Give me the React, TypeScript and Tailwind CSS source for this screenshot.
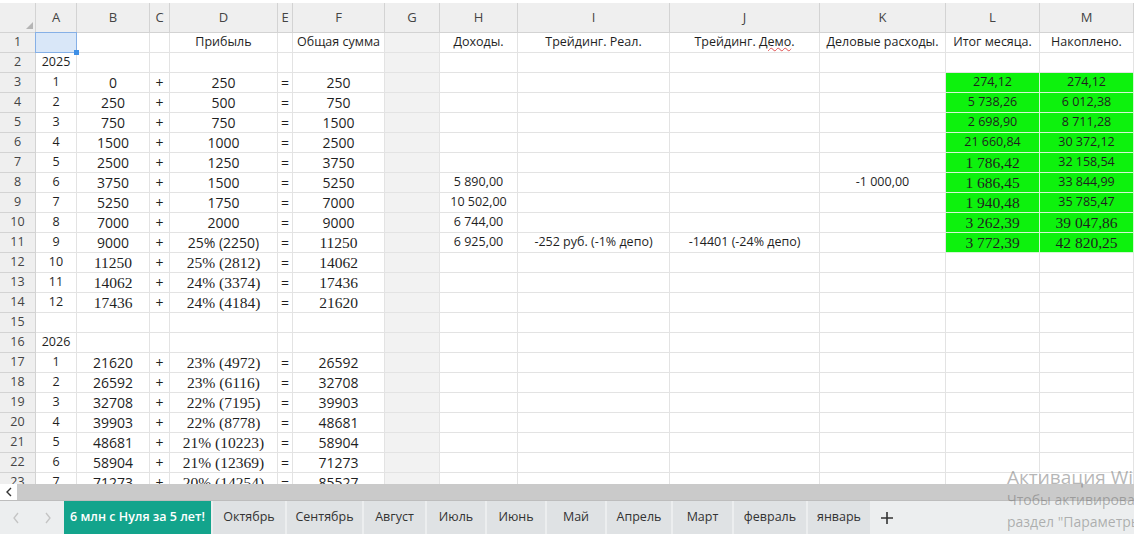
import React from 'react';

const colLetters = ['A', 'B', 'C', 'D', 'E', 'F', 'G', 'H', 'I', 'J', 'K', 'L', 'M'];

// rows 1..23, columns A..M
const rows: string[][] = [
  ['', '', '', 'Прибыль', '', 'Общая сумма', '', 'Доходы.', 'Трейдинг. Реал.', 'Трейдинг. Демо.', 'Деловые расходы.', 'Итог месяца.', 'Накоплено.'],
  ['2025', '', '', '', '', '', '', '', '', '', '', '', ''],
  ['1', '0', '+', '250', '=', '250', '', '', '', '', '', '274,12', '274,12'],
  ['2', '250', '+', '500', '=', '750', '', '', '', '', '', '5 738,26', '6 012,38'],
  ['3', '750', '+', '750', '=', '1500', '', '', '', '', '', '2 698,90', '8 711,28'],
  ['4', '1500', '+', '1000', '=', '2500', '', '', '', '', '', '21 660,84', '30 372,12'],
  ['5', '2500', '+', '1250', '=', '3750', '', '', '', '', '', '1 786,42', '32 158,54'],
  ['6', '3750', '+', '1500', '=', '5250', '', '5 890,00', '', '', '-1 000,00', '1 686,45', '33 844,99'],
  ['7', '5250', '+', '1750', '=', '7000', '', '10 502,00', '', '', '', '1 940,48', '35 785,47'],
  ['8', '7000', '+', '2000', '=', '9000', '', '6 744,00', '', '', '', '3 262,39', '39 047,86'],
  ['9', '9000', '+', '25% (2250)', '=', '11250', '', '6 925,00', '-252 руб. (-1% депо)', '-14401 (-24% депо)', '', '3 772,39', '42 820,25'],
  ['10', '11250', '+', '25% (2812)', '=', '14062', '', '', '', '', '', '', ''],
  ['11', '14062', '+', '24% (3374)', '=', '17436', '', '', '', '', '', '', ''],
  ['12', '17436', '+', '24% (4184)', '=', '21620', '', '', '', '', '', '', ''],
  ['', '', '', '', '', '', '', '', '', '', '', '', ''],
  ['2026', '', '', '', '', '', '', '', '', '', '', '', ''],
  ['1', '21620', '+', '23% (4972)', '=', '26592', '', '', '', '', '', '', ''],
  ['2', '26592', '+', '23% (6116)', '=', '32708', '', '', '', '', '', '', ''],
  ['3', '32708', '+', '22% (7195)', '=', '39903', '', '', '', '', '', '', ''],
  ['4', '39903', '+', '22% (8778)', '=', '48681', '', '', '', '', '', '', ''],
  ['5', '48681', '+', '21% (10223)', '=', '58904', '', '', '', '', '', '', ''],
  ['6', '58904', '+', '21% (12369)', '=', '71273', '', '', '', '', '', '', ''],
  ['7', '71273', '+', '20% (14254)', '=', '85527', '', '', '', '', '', '', ''],
];

const tabs = [
  { name: 'Октябрь', w: 'w-[72px]' },
  { name: 'Сентябрь', w: 'w-[75px]' },
  { name: 'Август', w: 'w-[61px]' },
  { name: 'Июль', w: 'w-[58px]' },
  { name: 'Июнь', w: 'w-[58px]' },
  { name: 'Май', w: 'w-[58px]' },
  { name: 'Апрель', w: 'w-[64px]' },
  { name: 'Март', w: 'w-[59px]' },
  { name: 'февраль', w: 'w-[72px]' },
  { name: 'январь', w: 'w-[62px]' },
];

function isSerif(r: number, c: number) {
  if (c === 1 && r >= 12 && r <= 14) return true;
  if (c === 3 && ((r >= 12 && r <= 14) || r >= 17)) return true;
  if (c === 5 && r >= 11 && r <= 14) return true;
  if (c === 11 && r >= 7 && r <= 11) return true;
  if (c === 12 && r >= 10 && r <= 11) return true;
  return false;
}

function Cell({ r, c, text }: { r: number; c: number; text: string }) {
  const green = (c === 11 || c === 12) && r >= 3 && r <= 11;
  const gray = c === 6;
  const big = r > 1 && c >= 1 && c <= 5;
  const serif = isSerif(r, c);

  let bg = 'bg-white border-[#e3e3e3]';
  if (green) bg = 'bg-[#0df20d] border-[#d3f7d3]';
  if (gray) bg = 'bg-[#f2f2f2] border-[#e3e3e3]';

  if (r === 1 && c === 0) {
    return (
      <div className="relative border-r border-b border-[#e3e3e3] bg-white">
        <div className="absolute -left-px -top-px h-[21px] w-[42px] border border-[#86b0e6] bg-[#d9e7f8]" />
        <div className="absolute -bottom-[3px] -right-[3px] h-[5px] w-[5px] bg-[#3d8fe6]" />
      </div>
    );
  }

  return (
    <div
      className={`flex items-center justify-center overflow-visible whitespace-nowrap border-r border-b text-[#1f1f1f] ${bg} ${
        serif
          ? "font-['Liberation_Serif',serif] text-[15.5px]"
          : big
          ? "font-['Open_Sans',sans-serif] text-[14px]"
          : "font-['Open_Sans',sans-serif] text-[12.5px]"
      }`}
    >
      {r === 1 && c === 9 ? (
        <span>
          Трейдинг. <span className="underline decoration-wavy decoration-[#e05050] decoration-1">Демо</span>.
        </span>
      ) : (
        text
      )}
    </div>
  );
}

export default function App() {
  return (
    <div className="relative h-[534px] w-[1134px] overflow-hidden bg-white font-['Open_Sans',sans-serif]">
      <div className="h-[3px] bg-white" />
      <div className="h-[481px] overflow-hidden">
        <div className="grid grid-cols-[36px_41px_73px_20px_108px_15px_92px_55px_78px_152px_150px_126px_94px_94px] grid-rows-[30px] auto-rows-[20px]">
          <div className="relative border-r border-b border-[#d3d3d3] bg-[#efefef]">
            <svg className="absolute bottom-[3px] right-[2px]" width="7" height="7" viewBox="0 0 7 7">
              <path d="M7 0 L7 7 L0 7 Z" fill="#b5b5b5" />
            </svg>
          </div>
          {colLetters.map((l) => (
            <div
              key={l}
              className="flex items-center justify-center border-r border-b border-[#d3d3d3] bg-[#efefef] text-[13px] text-[#444]"
            >
              {l}
            </div>
          ))}
          {rows.map((row, i) => (
            <React.Fragment key={i}>
              <div className="flex items-center justify-center border-r border-b border-[#d3d3d3] bg-[#efefef] text-[12.5px] text-[#444]">
                {i + 1}
              </div>
              {row.map((t, c) => (
                <Cell key={c} r={i + 1} c={c} text={t} />
              ))}
            </React.Fragment>
          ))}
        </div>
      </div>

      {/* horizontal scrollbar */}
      <div className="flex h-[17px] border-b border-[#bdbdbd]">
        <div className="flex w-[17px] items-center justify-center bg-white text-[#333]">
          <svg width="8" height="10" viewBox="0 0 8 10">
            <path d="M6 1 L2 5 L6 9" fill="none" stroke="#333" strokeWidth="1.4" />
          </svg>
        </div>
        <div className="flex-1 bg-[#cacaca]" />
      </div>

      {/* sheet tabs */}
      <div className="flex h-[33px] items-stretch bg-[#eceeef] text-[12.5px]">
        <div className="flex w-[64px] items-center">
          <span className="flex w-[32px] justify-center">
            <svg width="8" height="12" viewBox="0 0 8 12">
              <path d="M6 1 L2 6 L6 11" fill="none" stroke="#c4c4c4" strokeWidth="1.3" />
            </svg>
          </span>
          <span className="flex w-[32px] justify-center">
            <svg width="8" height="12" viewBox="0 0 8 12">
              <path d="M2 1 L6 6 L2 11" fill="none" stroke="#c4c4c4" strokeWidth="1.3" />
            </svg>
          </span>
        </div>
        <div className="flex w-[147px] items-center justify-center bg-[#13a48c] font-semibold text-white">
          6 млн с Нуля за 5 лет!
        </div>
        <div className="ml-[2px] flex gap-[2px]">
          {tabs.map((t) => (
            <div key={t.name} className={`flex items-center justify-center bg-[#dfe2e4] text-[#333] ${t.w}`}>
              {t.name}
            </div>
          ))}
        </div>
        <div className="flex w-[34px] items-center justify-center">
          <svg width="14" height="14" viewBox="0 0 14 14">
            <path d="M7 1 V13 M1 7 H13" stroke="#333" strokeWidth="1.6" />
          </svg>
        </div>
      </div>

      {/* windows activation watermark */}
      <div className="pointer-events-none absolute left-[1007px] top-[465px] whitespace-nowrap text-[#6e6e6e]/50">
        <div className="text-[19px] leading-[24px]">Активация Windows</div>
        <div className="text-[14px] leading-[22px]">Чтобы активировать Windows, перейдите в</div>
        <div className="text-[14px] leading-[22px]">раздел "Параметры".</div>
      </div>
    </div>
  );
}
